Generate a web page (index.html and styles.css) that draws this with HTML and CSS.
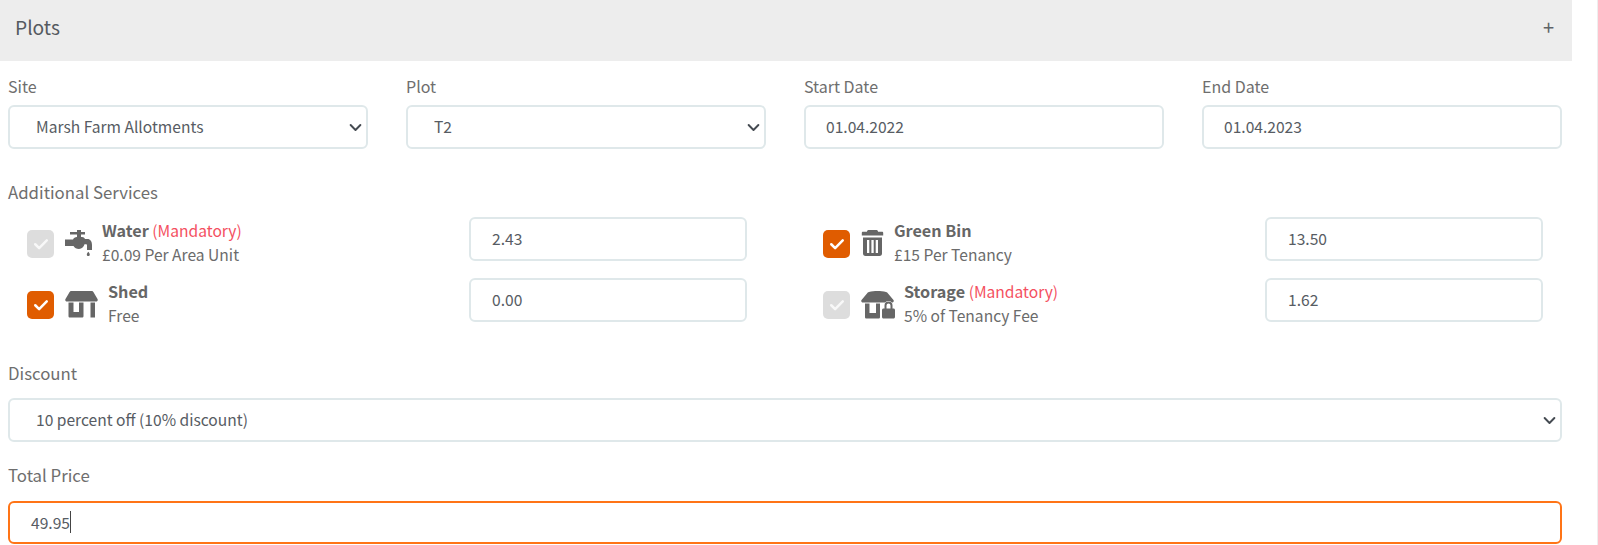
FILE: index.html
```html
<!DOCTYPE html>
<html lang="en">
<head>
<meta charset="utf-8">
<title>Plots</title>
<link rel="stylesheet" href="styles.css">
</head>
<body>
<div class="page">
  <header class="panel-head"><span class="panel-title">Plots</span><span class="panel-toggle">+</span></header>
  <form class="form">
    <div class="row-four">
      <div class="field"><label class="label">Site</label><select class="control select"><option>Marsh Farm Allotments</option></select></div>
      <div class="field"><label class="label">Plot</label><select class="control select"><option>T2</option></select></div>
      <div class="field"><label class="label">Start Date</label><input class="control" value="01.04.2022"></div>
      <div class="field"><label class="label">End Date</label><input class="control" value="01.04.2023"></div>
    </div>
    <div class="label services-label">Additional Services</div>
    <div class="services">
      <div class="service">
        <span class="check check-off"><svg viewBox="0 0 16 16" class="tick"><path d="M3.4 8.2l3.1 3.1 6.1-6.2"/></svg></span>
        <svg class="icon icon-tap" viewBox="0 0 27 26"><path d="M12 0h4v2h4v2.500h-4V7h1c1.500 0 2.500.8 3 2h2.500c2.800 0 4.500 2.500 4.500 6v5h-5v-4.500c0-.8-.4-1.200-1-1.200h-1.500c-.6 2.400-2.600 4.700-5.500 4.700-2.400 0-4.500-1.300-5.500-3H0V9.500h8C8.600 8 10 7 12 7V4.500H5V2h7z"/><path d="M23.300 21.800c.9 1.300 1.500 2 1.500 2.800a1.500 1.500 0 0 1-3 0c0-.8.6-1.500 1.500-2.800z"/></svg>
        <div class="service-text"><div class="service-name"><b>Water</b> <span class="mandatory">(Mandatory)</span></div><div class="service-price">£0.09 Per Area Unit</div></div>
        <input class="control service-input" value="2.43">
      </div>
      <div class="service">
        <span class="check check-on"><svg viewBox="0 0 16 16" class="tick"><path d="M3.4 8.2l3.1 3.1 6.1-6.2"/></svg></span>
        <svg class="icon icon-bin" viewBox="0 0 23 26"><path d="M7.500 0h8c.8 0 1.300.6 1.600 1.800H21c.8 0 1.200.5 1.200 1.200v2.500H.8V3c0-.7.4-1.200 1.200-1.200h3.900C6.200.6 6.700 0 7.500 0z"/><path fill-rule="evenodd" d="M2 7.500h19v16c0 1.500-1 2.500-2.500 2.500h-14C3 26 2 25 2 23.500zM6 10v13h2.300V10zm4.400 0v13h2.300V10zm4.300 0v13H17V10z"/></svg>
        <div class="service-text"><div class="service-name"><b>Green Bin</b></div><div class="service-price">£15 Per Tenancy</div></div>
        <input class="control service-input" value="13.50">
      </div>
      <div class="service">
        <span class="check check-on"><svg viewBox="0 0 16 16" class="tick"><path d="M3.4 8.2l3.1 3.1 6.1-6.2"/></svg></span>
        <svg class="icon icon-store" viewBox="0 0 33 27"><path d="M6.500 0h20c1 0 1.500.4 2 1.200l4 6.800c.7 1.300 0 2.500-1.500 2.500H2C.5 10.500-.2 9.300.5 8l4-6.800C5 .4 5.500 0 6.500 0z"/><path d="M3.500 11.500h5v9.500h5.500v-9.500h4.500V25c0 1-.6 1.500-1.500 1.500H5c-1 0-1.500-.5-1.500-1.500zM25.500 11.500h4.500v15h-4.500z"/></svg>
        <div class="service-text"><div class="service-name"><b>Shed</b></div><div class="service-price">Free</div></div>
        <input class="control service-input" value="0.00">
      </div>
      <div class="service">
        <span class="check check-off"><svg viewBox="0 0 16 16" class="tick"><path d="M3.4 8.2l3.1 3.1 6.1-6.2"/></svg></span>
        <svg class="icon icon-lock" viewBox="0 0 34 28"><path d="M8 1c5-1.300 12-1.300 17 0 1 .3 1.500.7 2 1.500l5.500 6.500c.7 1.300 0 2.500-1.500 2.500H2c-1.500 0-2.200-1.200-1.500-2.500L6 2.500C6.500 1.700 7 1.300 8 1z"/><path d="M4 12.500h4.500V22h6.500v-9.500h4V26c0 1-.6 1.500-1.500 1.500h-12C4.600 27.500 4 27 4 26z"/><path class="lock-halo" d="M23 18v-3.500a4.500 4.500 0 0 1 9 0V18h2v10H21V18z"/><path fill-rule="evenodd" d="M23.500 17.500v-3a4 4 0 0 1 8 0v3h1c.8 0 1.500.6 1.500 1.500v7c0 .9-.7 1.500-1.500 1.500h-10c-.8 0-1.500-.6-1.500-1.500v-7c0-.9.7-1.500 1.500-1.500zm2 0h4v-3a2 2 0 0 0-4 0z"/></svg>
        <div class="service-text"><div class="service-name"><b>Storage</b> <span class="mandatory">(Mandatory)</span></div><div class="service-price">5% of Tenancy Fee</div></div>
        <input class="control service-input" value="1.62">
      </div>
    </div>
    <div class="field discount"><label class="label">Discount</label><select class="control select"><option>10 percent off (10% discount)</option></select></div>
    <div class="field total"><label class="label">Total Price</label><div class="control control-focus">49.95<span class="caret"></span></div></div>
  </form>
</div>
</body>
</html>
```
FILE: styles.css
```css
* { box-sizing: border-box; }
html, body { margin: 0; padding: 0; background: #fff; overflow: hidden; }
body {
  height: 545px;
  border-right: 1px solid #eeeeee;
  font-family: "Noto Sans CJK SC", "Noto Sans", sans-serif;
  font-size: 15.6px;
  color: #6b6b6b;
}
.page { width: 1572px; }
.panel-head {
  height: 61px;
  background: #ededed;
  display: flex;
  align-items: center;
  justify-content: space-between;
  padding: 0 18px 8px 15px;
}
.panel-title { font-size: 19.2px; line-height: 24px; color: #555a60; }
.panel-toggle { font-size: 20px; line-height: 20px; color: #5f6368; }
.form { padding: 13px 10px 0 8px; }
.row-four { display: grid; grid-template-columns: repeat(4, 360px); column-gap: 38px; }
.label { display: block; font-size: 16.8px; line-height: 24px; height: 37px; color: #6e6e6e; }
.row-four .label { font-size: 16px; height: 31px; }
.control {
  display: block;
  width: 100%;
  height: 44px;
  border: 2px solid #dfe8ea;
  border-radius: 6px;
  background-color: #fff;
  padding: 0 20px 2px;
  font: inherit;
  font-size: 15.6px;
  color: #575c63;
  outline: none;
}
.select {
  appearance: none;
  -webkit-appearance: none;
  padding-left: 26px;
  background-image: url("data:image/svg+xml,%3Csvg xmlns='http://www.w3.org/2000/svg' viewBox='0 0 16 16'%3E%3Cpath fill='none' stroke='%23454b52' stroke-width='2.400' stroke-linecap='round' stroke-linejoin='round' d='M2 5l6 6 6-6'/%3E%3C/svg%3E");
  background-repeat: no-repeat;
  background-position: right 4px center;
  background-size: 13px 13px;
}
.services-label { margin-top: 31px; }
.services {
  display: grid;
  grid-template-columns: 720px 720px;
  column-gap: 76px;
  row-gap: 17px;
  padding: 0 19px;
}
.service { display: flex; align-items: flex-start; height: 44px; }
.check {
  flex: none;
  width: 27px;
  height: 28px;
  margin-top: 13px;
  border-radius: 5px;
  display: flex;
  align-items: center;
  justify-content: center;
  margin-right: 11px;
}
.check-on { background: #e05c00; }
.check-off { background: #dddddd; }
.tick { width: 20px; height: 20px; fill: none; stroke: #fff; stroke-width: 2; stroke-linecap: round; stroke-linejoin: round; }
.check-off .tick { opacity: .8; }
.icon { flex: none; fill: #666; margin-top: 13px; }
.icon-tap { width: 27px; height: 26px; margin-right: 10px; }
.icon-bin { width: 23px; height: 26px; margin-right: 10px; }
.icon-store { width: 33px; height: 27px; margin-right: 10px; }
.icon-lock { width: 34px; height: 28px; margin-right: 9px; }
.lock-halo { fill: #fff; }
.service-text { flex: 1; line-height: 24px; margin-top: 1px; }
.service-name b { font-weight: 700; font-size: 16.2px; color: #666; }
.mandatory { color: #f4505f; }
.service-price { color: #6b6b6b; }
.service-input { flex: none; width: 278px; padding-left: 21px; }
.discount { margin-top: 39px; }
.total { margin-top: 21px; }
.total .label { height: 38px; }
.control-focus {
  height: 43px;
  padding-left: 21px;
  border-color: #ff7416;
  display: flex;
  align-items: center;
  line-height: 24px;
}
.caret { display: inline-block; width: 1px; height: 22px; background: #444; }
```
